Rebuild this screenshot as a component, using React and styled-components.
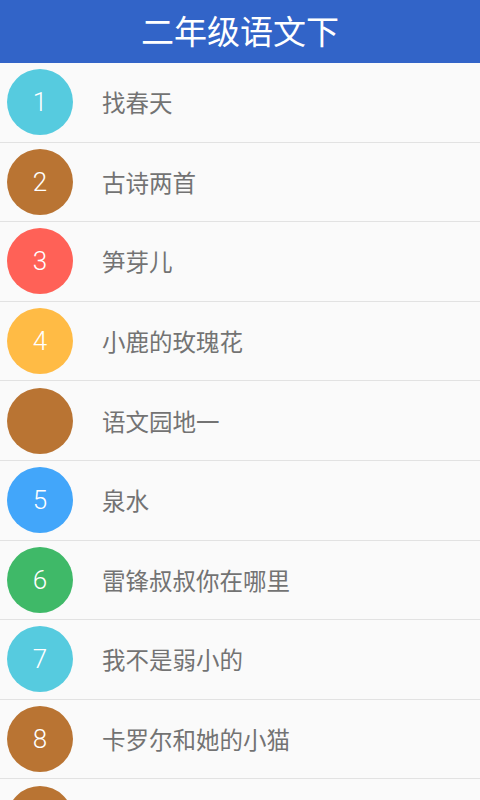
import styled, { createGlobalStyle } from 'styled-components'

const lessons = [
  { no: '1', title: '找春天', color: '#56cbdf' },
  { no: '2', title: '古诗两首', color: '#b97433' },
  { no: '3', title: '笋芽儿', color: '#ff6157' },
  { no: '4', title: '小鹿的玫瑰花', color: '#ffbb45' },
  { no: '', title: '语文园地一', color: '#b97433' },
  { no: '5', title: '泉水', color: '#42a6fa' },
  { no: '6', title: '雷锋叔叔你在哪里', color: '#3fb968' },
  { no: '7', title: '我不是弱小的', color: '#56cbdf' },
  { no: '8', title: '卡罗尔和她的小猫', color: '#b97433' },
  { no: '', title: '', color: '#b97433' },
]

const GlobalStyle = createGlobalStyle`
  html, body {
    margin: 0;
    padding: 0;
    background: #fafafa;
    overflow: hidden;
  }
  body {
    font-family: Roboto, "Noto Sans CJK SC", sans-serif;
  }
`

export default function App() {
  return (
    <>
      <GlobalStyle />
      <Page>
        <Header>二年级语文下</Header>
        <List>
          {lessons.map((l, i) => (
            <Row key={i}>
              <Badge $color={l.color}>{l.no}</Badge>
              <Title>{l.title}</Title>
            </Row>
          ))}
        </List>
      </Page>
    </>
  )
}

const Page = styled.div`
  width: 480px;
  height: 800px;
  overflow: hidden;
  background: #fafafa;
`

const Header = styled.header`
  height: 63px;
  background: #3264c8;
  color: #ffffff;
  display: flex;
  align-items: center;
  justify-content: center;
  font-family: "Noto Sans CJK SC", sans-serif;
  font-size: 33px;
  padding-bottom: 4px;
  box-sizing: border-box;
`

const List = styled.ul`
  list-style: none;
  margin: 0;
  padding: 0;
`

const Row = styled.li`
  height: 79.6px;
  box-sizing: border-box;
  border-bottom: 1px solid #e2e2e2;
  display: flex;
  align-items: center;
  padding-left: 7px;
`

const Badge = styled.div`
  width: 66px;
  height: 66px;
  border-radius: 50%;
  background: ${(p) => p.$color};
  color: #ffffff;
  display: flex;
  align-items: center;
  justify-content: center;
  font-family: Roboto, sans-serif;
  font-weight: 300;
  font-size: 26px;
  flex-shrink: 0;
`

const Title = styled.span`
  margin-left: 29px;
  font-family: "Noto Sans CJK SC", sans-serif;
  font-size: 23.5px;
  color: #737373;
`
